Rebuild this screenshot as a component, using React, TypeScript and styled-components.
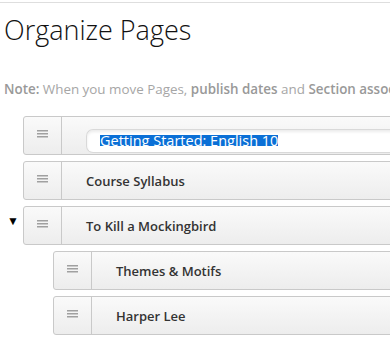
import React from "react";
import styled, { createGlobalStyle } from "styled-components";

const Global = createGlobalStyle`
  html, body { margin: 0; padding: 0; overflow: hidden; background: #fff; }
  body { font-family: "Open Sans", "Liberation Sans", sans-serif; }
`;

const Page = styled.div`
  border-top: 1px solid #dedede;
  margin-top: 2px;
  padding: 0 0 0 4px;
  width: 600px;
`;

const Title = styled.h1`
  margin: 0;
  padding-top: 7px;
  font-weight: 300;
  font-size: 27px;
  line-height: 40px;
  color: #111;
`;

const Note = styled.p`
  margin: 29px 0 0 0;
  font-size: 13.4px;
  line-height: 20px;
  color: #a6a6a6;
  white-space: nowrap;
  b { font-weight: 600; color: #999; }
`;

const List = styled.ul<{ $indent: number }>`
  list-style: none;
  margin: 0;
  padding: 0 0 0 ${(p) => p.$indent}px;
  display: flex;
  flex-direction: column;
  gap: 6px;
`;

const ListTop = styled(List)`
  margin-top: 17px;
`;

const Item = styled.li`
  position: relative;
  display: flex;
  flex-direction: column;
  gap: 6px;
`;

const Toggle = styled.span`
  position: absolute;
  left: -16px;
  top: 9px;
  font-size: 12px;
  line-height: 12px;
  color: #000;
`;

const Row = styled.div`
  display: flex;
  height: 37px;
  border: 1px solid #c9c9c9;
  border-radius: 3px;
  background: linear-gradient(#fafafa, #ededed);
`;

const Handle = styled.div`
  width: 38px;
  flex: none;
  border-right: 1px solid #c9c9c9;
  display: flex;
  align-items: center;
  justify-content: center;
  padding-bottom: 4px;
  box-sizing: border-box;
`;

const Label = styled.div`
  display: flex;
  align-items: center;
  padding-left: 24px;
  font-size: 13px;
  font-weight: 600;
  color: #333;
  flex: 1;
`;

const Input = styled.div`
  margin-top: 10px;
  height: 24px;
  flex: 1;
  box-sizing: border-box;
  background: #fff;
  border: 1px solid #d9d9d9;
  border-right: none;
  border-radius: 7px 0 0 7px;
  box-shadow: inset 0 2px 3px rgba(0, 0, 0, 0.08);
  padding-left: 13px;
  display: flex;
  align-items: center;
  font-size: 14.5px;
  font-weight: 400;
`;

const Selected = styled.span`
  display: inline-block;
  height: 11px;
  line-height: 11px;
  overflow: hidden;
  white-space: nowrap;
  background: #0a6fd6;
  color: #fff;
`;

const Grip = () => (
  <svg width="11" height="8" viewBox="0 0 11 8">
    <rect x="0" y="0" width="11" height="1.5" fill="#a0a0a0" />
    <rect x="0" y="3" width="11" height="1.5" fill="#a0a0a0" />
    <rect x="0" y="6" width="11" height="1.5" fill="#a0a0a0" />
  </svg>
);

const PageRow = ({ children }: { children: React.ReactNode }) => (
  <Row>
    <Handle>
      <Grip />
    </Handle>
    {children}
  </Row>
);

export default function App() {
  return (
    <>
      <Global />
      <Page>
        <Title>Organize Pages</Title>
        <Note>
          <b>Note:</b> When you move Pages, <b>publish dates</b> and <b>Section associations</b> will be kept.
        </Note>
        <ListTop $indent={19}>
          <Item>
            <PageRow>
              <Label>
                <Input>
                  <Selected>Getting Started: English 10</Selected>
                </Input>
              </Label>
            </PageRow>
          </Item>
          <Item>
            <PageRow>
              <Label>Course Syllabus</Label>
            </PageRow>
          </Item>
          <Item>
            <Toggle>▼</Toggle>
            <PageRow>
              <Label>To Kill a Mockingbird</Label>
            </PageRow>
            <List $indent={30}>
              <Item>
                <PageRow>
                  <Label>Themes &amp; Motifs</Label>
                </PageRow>
              </Item>
              <Item>
                <PageRow>
                  <Label>Harper Lee</Label>
                </PageRow>
              </Item>
            </List>
          </Item>
        </ListTop>
      </Page>
    </>
  );
}
